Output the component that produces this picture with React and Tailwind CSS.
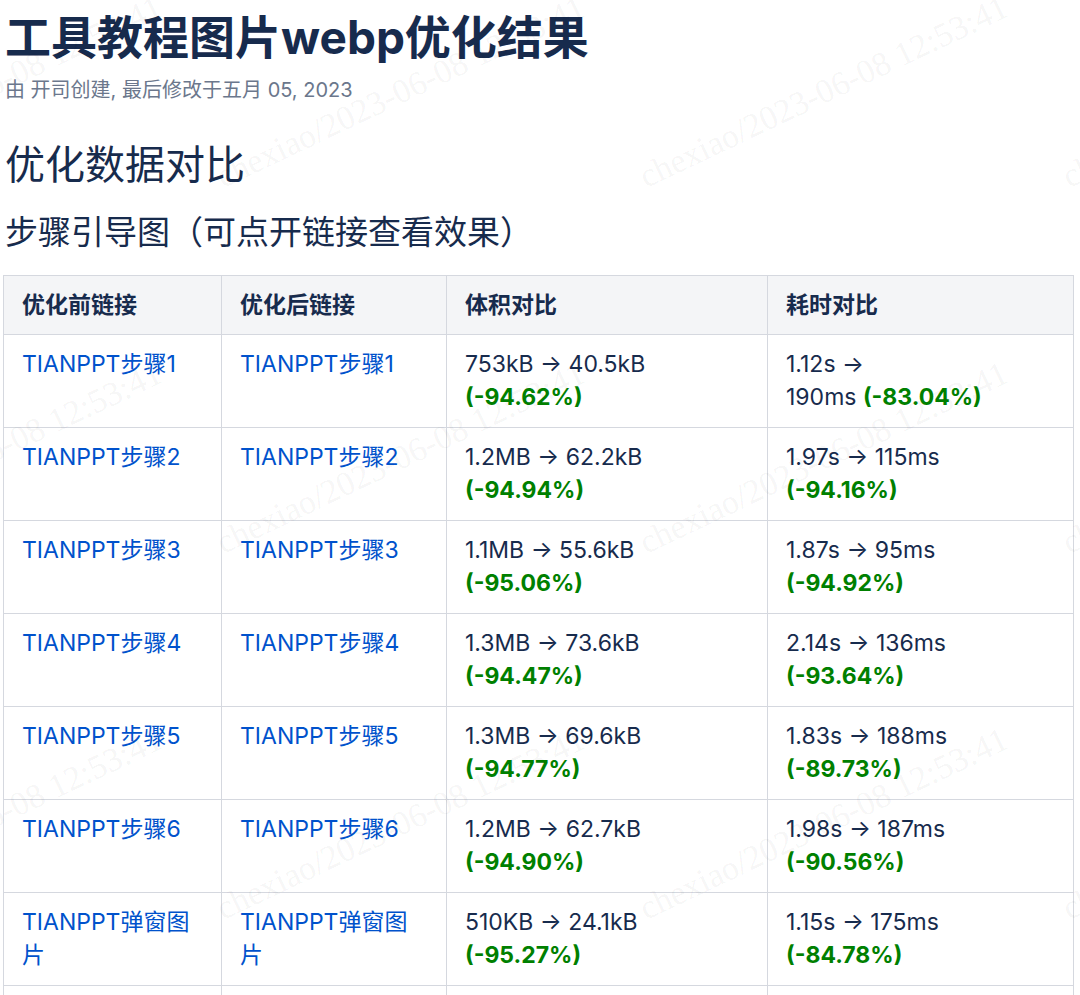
import React from "react";

const rows = [
  { name: "TIANPPT步骤1", size: "753kB → 40.5kB", sizePct: "(-94.62%)", time: ["1.12s →", "190ms"], timePct: "(-83.04%)", inline: true },
  { name: "TIANPPT步骤2", size: "1.2MB → 62.2kB", sizePct: "(-94.94%)", time: ["1.97s → 115ms"], timePct: "(-94.16%)" },
  { name: "TIANPPT步骤3", size: "1.1MB → 55.6kB", sizePct: "(-95.06%)", time: ["1.87s → 95ms"], timePct: "(-94.92%)" },
  { name: "TIANPPT步骤4", size: "1.3MB → 73.6kB", sizePct: "(-94.47%)", time: ["2.14s → 136ms"], timePct: "(-93.64%)" },
  { name: "TIANPPT步骤5", size: "1.3MB → 69.6kB", sizePct: "(-94.77%)", time: ["1.83s → 188ms"], timePct: "(-89.73%)" },
  { name: "TIANPPT步骤6", size: "1.2MB → 62.7kB", sizePct: "(-94.90%)", time: ["1.98s → 187ms"], timePct: "(-90.56%)" },
  { name: "TIANPPT弹窗图", name2: "片", size: "510KB → 24.1kB", sizePct: "(-95.27%)", time: ["1.15s → 175ms"], timePct: "(-84.78%)" },
];

// watermark start points (baseline of first letter)
const marks = [];
[-199, 224, 647, 1070].forEach((x) => {
  [190, 556, 922].forEach((y) => marks.push({ x, y }));
});

function Cell({ children }) {
  return (
    <td className="border border-[#d5d8df] px-[18px] pt-[13px] pb-[13px] align-top">
      {children}
    </td>
  );
}

function Link({ children }) {
  return <a className="text-[#0052cc] cursor-pointer">{children}</a>;
}

function Pct({ children }) {
  return <span className="font-bold text-[#008000]">{children}</span>;
}

export default function App() {
  return (
    <div
      className="relative min-h-screen overflow-hidden bg-white pl-[3px] pt-[10px] text-[#172b4d]"
      style={{ fontFamily: '"Inter", "Noto Sans CJK SC", sans-serif' }}
    >
      <h1 className="text-[46px] leading-[54px] font-bold pl-[2px]">
        工具教程图片webp优化结果
      </h1>
      <div className="mt-[13px] text-[20px] leading-[27px] text-[#6b778c] pl-[2px]">
        由 开司创建, 最后修改于五月 05, 2023
      </div>

      <h2 className="mt-[37px] text-[40px] leading-[47px] font-normal pl-[2px]">
        优化数据对比
      </h2>
      <h3 className="mt-[25px] text-[33px] leading-[39px] font-normal pl-[2px]">
        步骤引导图（可点开链接查看效果）
      </h3>

      <table className="mt-[23px] w-[1071px] table-fixed border-collapse text-[23px] leading-[33px]">
        <colgroup>
          <col className="w-[218px]" />
          <col className="w-[225px]" />
          <col className="w-[321px]" />
          <col className="w-[306px]" />
        </colgroup>
        <thead>
          <tr className="bg-[#f4f5f7]">
            {["优化前链接", "优化后链接", "体积对比", "耗时对比"].map((h) => (
              <th
                key={h}
                className="border border-[#d5d8df] px-[18px] pt-[13px] pb-[12px] text-left font-bold"
              >
                {h}
              </th>
            ))}
          </tr>
        </thead>
        <tbody>
          {rows.map((r, i) => (
            <tr key={i}>
              <Cell>
                <Link>{r.name}</Link>
                {r.name2 && (
                  <div>
                    <Link>{r.name2}</Link>
                  </div>
                )}
              </Cell>
              <Cell>
                <Link>{r.name}</Link>
                {r.name2 && (
                  <div>
                    <Link>{r.name2}</Link>
                  </div>
                )}
              </Cell>
              <Cell>
                <div>{r.size}</div>
                <div>
                  <Pct>{r.sizePct}</Pct>
                </div>
              </Cell>
              <Cell>
                {r.inline ? (
                  <>
                    <div>{r.time[0]}</div>
                    <div>
                      {r.time[1]} <Pct>{r.timePct}</Pct>
                    </div>
                  </>
                ) : (
                  <>
                    <div>{r.time[0]}</div>
                    <div>
                      <Pct>{r.timePct}</Pct>
                    </div>
                  </>
                )}
              </Cell>
            </tr>
          ))}
          <tr>
            <Cell>
              <Link>TIANPPT首页</Link>
            </Cell>
            <Cell>
              <Link>TIANPPT首页</Link>
            </Cell>
            <Cell>
              <div>&nbsp;</div>
              <div>&nbsp;</div>
            </Cell>
            <Cell>
              <div>&nbsp;</div>
            </Cell>
          </tr>
        </tbody>
      </table>

      {/* watermark overlay */}
      <div className="pointer-events-none absolute inset-0">
        {marks.map((m, i) => (
          <div
            key={i}
            className="absolute whitespace-nowrap text-[34px] leading-[34px] text-black/[0.05] origin-[0_30px] -rotate-[25.4deg]"
            style={{
              left: m.x,
              top: m.y - 30,
              fontFamily: '"Liberation Serif", serif',
            }}
          >
            chexiao/2023-06-08 12:53:41
          </div>
        ))}
      </div>
    </div>
  );
}
